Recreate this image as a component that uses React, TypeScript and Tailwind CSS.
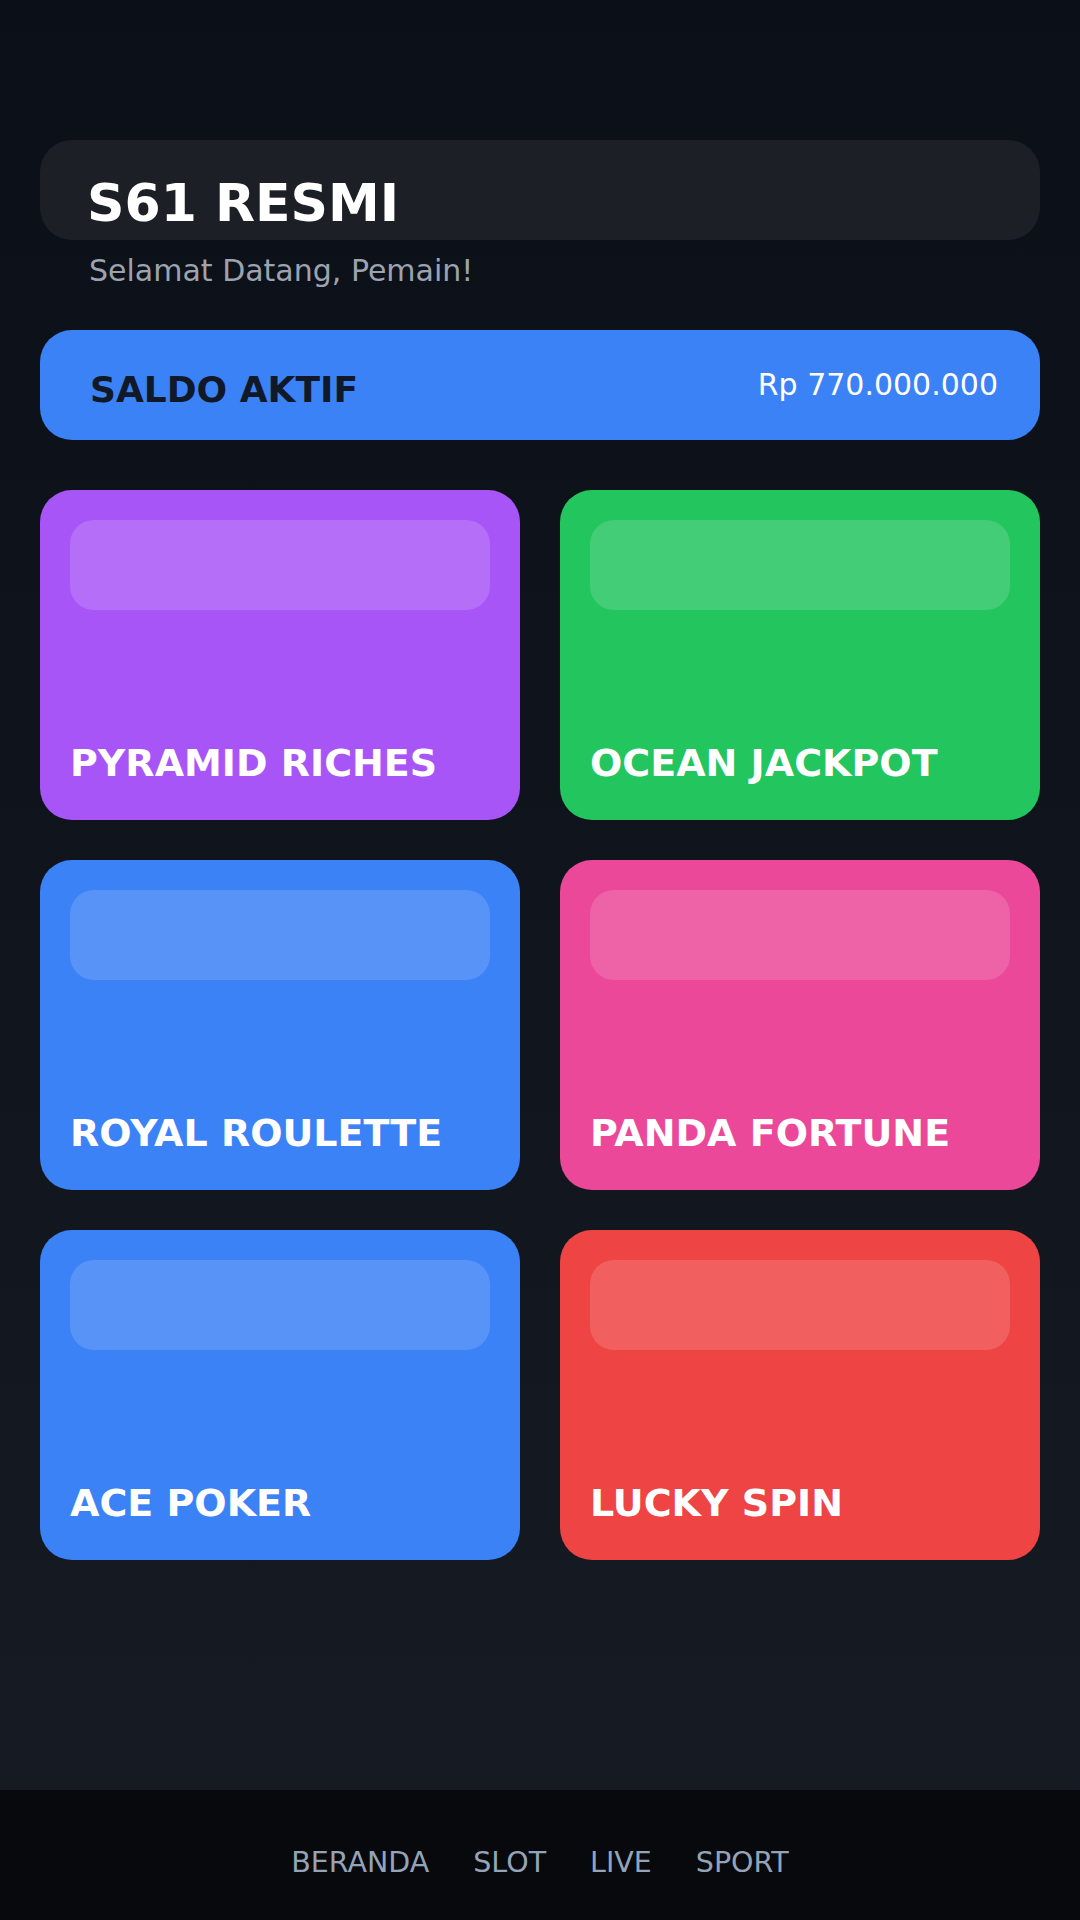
const games = [
  { name: 'PYRAMID RICHES', color: 'bg-[#a855f7]' },
  { name: 'OCEAN JACKPOT', color: 'bg-[#22c55e]' },
  { name: 'ROYAL ROULETTE', color: 'bg-[#3b82f6]' },
  { name: 'PANDA FORTUNE', color: 'bg-[#ec4899]' },
  { name: 'ACE POKER', color: 'bg-[#3b82f6]' },
  { name: 'LUCKY SPIN', color: 'bg-[#ef4444]' },
]

const navItems = ['BERANDA', 'SLOT', 'LIVE', 'SPORT']

const GameCard = ({ name, color }: { name: string; color: string }) => {
  return (
    <div
      className={`flex h-[330px] flex-col justify-between rounded-[32px] p-[30px] pb-[33px] ${color}`}
    >
      <div className="h-[90px] rounded-3xl bg-white/15" />
      <h2 className="text-[38px] leading-[1.2] font-bold text-white">{name}</h2>
    </div>
  )
}

export default function App() {
  return (
    <div className="flex min-h-[1920px] flex-col bg-gradient-to-b from-[#0b0f17] to-[#161b24] font-['DejaVu_Sans',sans-serif]">
      <main className="flex-1 px-[40px] pt-[140px]">
        <header className="h-[100px] rounded-[32px] bg-[#1c1f26] pt-[33px] pl-[47px]">
          <h1 className="text-[52px] leading-[60px] font-bold text-white">
            S61 RESMI
          </h1>
          <p className="mt-[19px] pl-[2px] text-[30px] leading-[1.25] text-[#9ca3af]">
            Selamat Datang, Pemain!
          </p>
        </header>

        <section className="mt-[90px] flex h-[110px] items-center justify-between rounded-[32px] bg-[#3b82f6] pr-[42px] pl-[50px]">
          <span className="mt-[9px] text-[36px] leading-[1.2] font-bold text-[#111827]">
            SALDO AKTIF
          </span>
          <span className="text-[30px] leading-[1.2] text-white">
            Rp 770.000.000
          </span>
        </section>

        <section className="mt-[50px] grid grid-cols-2 gap-[40px]">
          {games.map((g) => (
            <GameCard key={g.name} name={g.name} color={g.color} />
          ))}
        </section>
      </main>

      <nav className="flex h-[130px] justify-center gap-[44px] bg-[#07090d] pt-[52px]">
        {navItems.map((item) => (
          <span key={item} className="text-[28.5px] leading-[1.5] text-[#94a3b8]">
            {item}
          </span>
        ))}
      </nav>
    </div>
  )
}
